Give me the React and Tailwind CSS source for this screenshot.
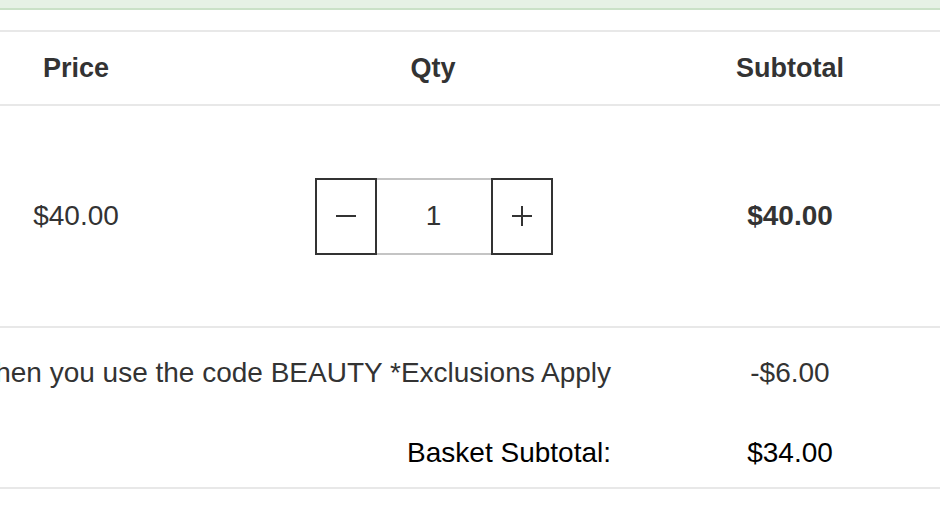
import React from "react";

const cols = "grid grid-cols-[152px_103px_356px_29px_300px]";

let QtyControl = ({ value }) => {
	return (
		<div className="flex h-[77px] w-[238px]">
			<button className="w-[62px] h-full border-2 border-[#333] flex items-center justify-center">
				<span className="block w-[20px] h-[2px] bg-[#333]" />
			</button>
			<div className="flex-1 h-full border-y-2 border-[#c4c4c4] flex items-center justify-center text-[28px] text-[#333]">
				{value}
			</div>
			<button className="w-[62px] h-full border-2 border-[#333] flex items-center justify-center relative">
				<span className="block w-[20px] h-[2px] bg-[#333]" />
				<span className="absolute w-[2px] h-[20px] bg-[#333]" />
			</button>
		</div>
	)
}

export default function App() {
	return (
		<div className="w-[940px] h-[524px] overflow-hidden bg-white font-['Liberation_Sans',Arial,sans-serif]">
			<div className="h-[10px] bg-[#e6f1e5] border-b-2 border-[#cae1c7]" />
			<div className="h-[20px]" />

			<div className={`${cols} h-[76px] border-y-2 border-[#e8e8e8] items-center text-[27px] font-bold text-[#333]`}>
				<div className="text-center">Price</div>
				<div />
				<div className="text-center">Qty</div>
				<div />
				<div className="text-center">Subtotal</div>
			</div>

			<div className={`${cols} h-[222px] border-b-2 border-[#e8e8e8] items-center text-[28px] text-[#333]`}>
				<div className="text-center">$40.00</div>
				<div />
				<div className="flex justify-center pl-[1px]"><QtyControl value={1} /></div>
				<div />
				<div className="text-center font-bold">$40.00</div>
			</div>

			<div className="flex h-[90px] items-center text-[28px] text-[#333]">
				<div className="w-[611px] flex justify-end whitespace-nowrap">
					<span>Save 15% on orders when you use the code BEAUTY *Exclusions Apply</span>
				</div>
				<div className="w-[29px]" />
				<div className="w-[300px] text-center">-$6.00</div>
			</div>

			<div className="flex h-[71px] items-center text-[28px] text-black border-b-2 border-[#e8e8e8]">
				<div className="w-[611px] text-right">Basket Subtotal:</div>
				<div className="w-[29px]" />
				<div className="w-[300px] text-center">$34.00</div>
			</div>
		</div>
	)
}
